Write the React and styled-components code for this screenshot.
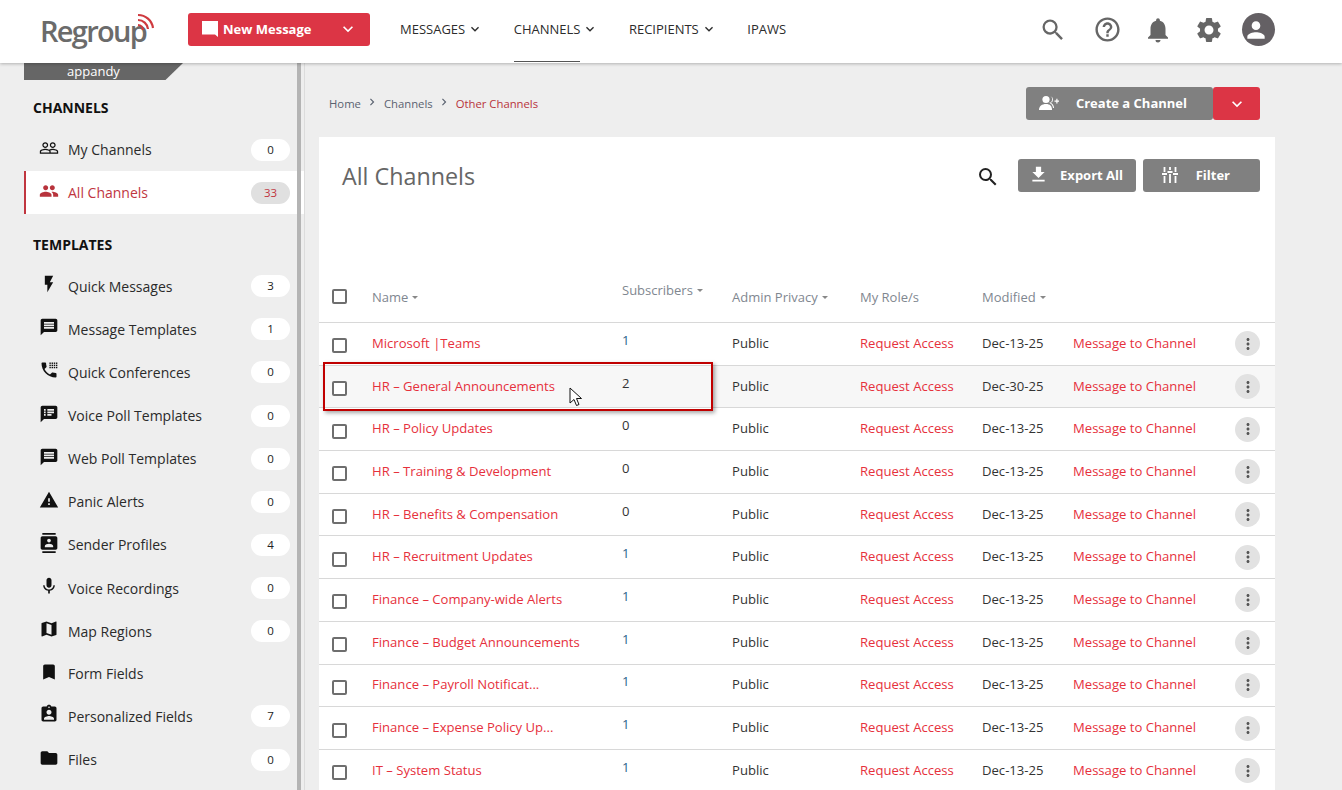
import React from 'react';
import styled, { createGlobalStyle } from 'styled-components';
import {
  MdPeopleOutline, MdPeople, MdFlashOn, MdMessage, MdSpeakerNotes, MdWarning,
  MdContacts, MdMic, MdMap, MdBookmark, MdAssignmentInd, MdFolder, MdSearch, MdHelpOutline,
  MdNotifications, MdSettings, MdPerson, MdKeyboardArrowDown, MdChevronRight, MdFileDownload,
  MdMoreVert,
} from 'react-icons/md';

const GlobalStyle = createGlobalStyle`
  html, body { margin: 0; padding: 0; height: 100%; overflow: hidden; }
  body { font-family: "Open Sans", "Liberation Sans", sans-serif; background: #eeeeee; color: #333; }
  * { box-sizing: border-box; }
`;

const Page = styled.div`
  height: 100vh;
  display: flex;
  flex-direction: column;
  overflow: hidden;
`;

const Header = styled.header`
  height: 63px;
  flex: none;
  background: #fff;
  box-shadow: 0 1px 3px rgba(0, 0, 0, 0.25);
  display: flex;
  align-items: center;
  padding-left: 40px;
  position: relative;
  z-index: 2;
`;

const Logo = styled.div`
  width: 148px;
  flex: none;
  position: relative;
  font-size: 29px;
  font-weight: 600;
  letter-spacing: -1.7px;
  color: #6b6b6b;
  line-height: 40px;
  margin-top: -1px;
  svg { position: absolute; left: 96px; top: -1px; }
`;

const NewMessage = styled.button`
  width: 182px;
  height: 33px;
  margin-top: -4px;
  border: 0;
  border-radius: 3px;
  background: #dc3545;
  color: #fff;
  font: 700 13px "Open Sans", sans-serif;
  display: flex;
  align-items: center;
  padding: 0 12px 2px 13px;
  gap: 4px;
  svg:last-child { margin-left: auto; }
`;

const Nav = styled.nav`
  display: flex;
  align-self: stretch;
  margin-left: 30px;
  gap: 30.5px;
`;

const NavItem = styled.div`
  display: flex;
  align-items: center;
  height: 100%;
  padding-bottom: 6px;
  font-size: 13px;
  color: #2c2c2c;
  svg { margin-left: 2px; }
`;

const NavLabel = styled.span`
  height: 100%;
  display: flex;
  align-items: center;
  position: relative;
  &::after {
    content: '';
    display: ${p => (p.$active ? 'block' : 'none')};
    position: absolute;
    left: 0;
    right: 0;
    bottom: -5px;
    height: 1px;
    background: #555;
  }
`;

const HeaderIcons = styled.div`
  margin-left: auto;
  margin-right: 67px;
  margin-top: -4px;
  display: flex;
  align-items: center;
  gap: 21px;
  color: #666;
  svg:first-child { margin-right: 5px; }
`;

const Avatar = styled.div`
  width: 33px;
  height: 33px;
  margin-left: -3px;
  border-radius: 50%;
  background: #646064;
  color: #fff;
  display: flex;
  align-items: center;
  justify-content: center;
`;

const Body = styled.div`
  flex: 1;
  display: flex;
  min-height: 0;
`;

const Sidebar = styled.aside`
  width: 305px;
  flex: none;
  border-right: 1px solid #dcdcdc;
  position: relative;
  padding-left: 24px;
  &::after {
    content: '';
    position: absolute;
    left: 297px;
    top: 0;
    bottom: 0;
    width: 4px;
    background: #b4b4b4;
  }
`;

const UserTab = styled.div`
  width: 159px;
  height: 17px;
  background: #666;
  color: #fff;
  font-size: 13px;
  line-height: 17px;
  text-align: center;
  padding-right: 20px;
  clip-path: polygon(0 0, 100% 0, 89% 100%, 0 100%);
`;

const SectionTitle = styled.h3`
  margin: 0;
  height: 20px;
  padding-left: 9px;
  font-size: 14px;
  font-weight: 700;
  line-height: 20px;
  color: #111;
`;

const SideList = styled.div`
  margin-top: ${p => p.$top}px;
`;

const SideRow = styled.div`
  width: 280px;
  height: ${p => (p.$short ? 42.1 : 43.15)}px;
  display: flex;
  align-items: center;
  padding-left: ${p => (p.$active ? 13 : 15)}px;
  padding-right: 14px;
  font-size: 14px;
  color: ${p => (p.$active ? '#c0363f' : '#2a2a2a')};
  background: ${p => (p.$active ? '#fff' : 'transparent')};
  border-left: ${p => (p.$active ? '2px solid #c0363f' : '0')};
  svg {
    flex: none;
    margin-right: 9px;
    margin-top: -4px;
    color: ${p => (p.$active ? '#b8333c' : '#111')};
  }
`;

const Pill = styled.span`
  margin-left: auto;
  width: 39px;
  height: 22px;
  border-radius: 11px;
  background: ${p => (p.$active ? '#e0e0e0' : '#fff')};
  color: ${p => (p.$active ? '#c0363f' : '#222')};
  font-size: 11.5px;
  text-align: center;
  line-height: 21px;
`;

const Main = styled.main`
  flex: 1;
  min-width: 0;
  padding: 0 67px 0 14px;
`;

const TopBar = styled.div`
  height: 74px;
  padding: 24px 15px 0 10px;
  display: flex;
  justify-content: space-between;
`;

const Breadcrumbs = styled.div`
  display: flex;
  align-items: center;
  height: 33px;
  font-size: 11.3px;
  color: #5a6270;
  svg { margin: -3px 4.5px 0 4.5px; }
`;

const CrumbActive = styled.span`
  color: #b8333c;
`;

const ButtonGroup = styled.div`
  display: flex;
`;

const GreyButton = styled.button`
  width: ${p => p.$width}px;
  height: 33px;
  border: 0;
  border-radius: 3px;
  background: #808080;
  color: #fff;
  font: 700 13px "Open Sans", sans-serif;
  display: flex;
  align-items: center;
  justify-content: space-between;
  padding: 0 ${p => p.$right}px 2px ${p => p.$left}px;
`;

const RedButton = styled.button`
  width: 47px;
  height: 33px;
  border: 0;
  border-radius: 3px;
  background: #dc3545;
  color: #fff;
  display: flex;
  align-items: center;
  justify-content: center;
  padding: 0;
`;

const Card = styled.section`
  background: #fff;
  height: 800px;
  position: relative;
`;

const CardTop = styled.div`
  height: 129px;
  padding: 22px 15px 0 23px;
  display: flex;
  align-items: flex-start;
`;

const Title = styled.h1`
  margin: 0;
  font-size: 23.3px;
  font-weight: 400;
  line-height: 35px;
  color: #666;
`;

const CardActions = styled.div`
  margin-left: auto;
  display: flex;
  align-items: center;
  gap: 7px;
  svg.search { margin: 2px 11px 0 0; color: #222; }
`;

const HeadRow = styled.div`
  display: grid;
  grid-template-columns: 53px 250px 110px 128px 122px 91px 162px 1fr;
  height: 57px;
  border-bottom: 1px solid #d8d8d8;
  font-size: 13px;
  color: #7f8790;
`;

const HeadCell = styled.div`
  display: flex;
  align-items: center;
  height: 100%;
  padding-top: ${p => (p.$raised ? '5px' : '12px')};
  padding-bottom: ${p => (p.$raised ? '14px' : '7px')};
`;

const Check = styled.span`
  width: 15px;
  height: 15px;
  border: 2px solid #6e6e6e;
  border-radius: 2px;
  background: #fff;
  margin-left: 13px;
  margin-top: ${p => p.$top || 0}px;
`;

const Row = styled.div`
  display: grid;
  grid-template-columns: 53px 250px 110px 128px 122px 91px 162px 1fr;
  align-items: center;
  height: 42.7px;
  border-bottom: 1px solid #d8d8d8;
  background: ${p => (p.$hover ? '#f7f7f7' : '#fff')};
  font-size: 13.1px;
  color: #333;
`;

const Cell = styled.span`
  margin-bottom: 2px;
`;

const RedLink = styled.span`
  color: #e6303c;
  white-space: nowrap;
  margin-bottom: 2px;
`;

const SubCount = styled.span`
  color: ${p => (p.$zero ? '#333' : '#2a5f8a')};
  margin-bottom: 8px;
`;

const MenuDot = styled.span`
  width: 25px;
  height: 25px;
  border-radius: 50%;
  background: #e2e2e2;
  color: #555;
  display: flex;
  align-items: center;
  justify-content: center;
`;

const Highlight = styled.div`
  position: absolute;
  left: 4px;
  top: 225px;
  width: 390px;
  height: 49px;
  border: 2px solid #c00000;
  box-shadow: 2px 2px 4px rgba(0, 0, 0, 0.35);
  pointer-events: none;
`;

const Cursor = styled.svg`
  position: absolute;
  left: 250px;
  top: 250px;
`;

function ConferenceIcon({ size }) {
  const dots = [];
  for (let r = 0; r < 3; r++) {
    for (let c = 0; c < 4; c++) {
      dots.push(<rect key={`${r}-${c}`} x={12.5 + c * 2.6} y={3 + r * 2.6} width="1.7" height="1.7" />);
    }
  }
  return (
    <svg width={size} height={size} viewBox="0 0 24 24" fill="currentColor">
      <path d="M20 15.5c-1.25 0-2.45-.2-3.57-.57-.35-.11-.74-.03-1.02.24l-2.2 2.2c-2.83-1.44-5.15-3.75-6.59-6.59l2.2-2.21c.28-.26.36-.65.25-1C8.700 6.450 8.500 5.250 8.500 4c0-.55-.45-1-1-1H4c-.55 0-1 .45-1 1 0 9.390 7.610 17 17 17 .55 0 1-.45 1-1v-3.500c0-.55-.45-1-1-1z" />
      {dots}
    </svg>
  );
}

const channels = [
  { icon: MdPeopleOutline, label: 'My Channels', count: 0 },
  { icon: MdPeople, label: 'All Channels', count: 33, active: true },
];

const templates = [
  { icon: MdFlashOn, label: 'Quick Messages', count: 3 },
  { icon: MdMessage, label: 'Message Templates', count: 1 },
  { icon: ConferenceIcon, label: 'Quick Conferences', count: 0 },
  { icon: MdSpeakerNotes, label: 'Voice Poll Templates', count: 0 },
  { icon: MdMessage, label: 'Web Poll Templates', count: 0 },
  { icon: MdWarning, label: 'Panic Alerts', count: 0 },
  { icon: MdContacts, label: 'Sender Profiles', count: 4 },
  { icon: MdMic, label: 'Voice Recordings', count: 0 },
  { icon: MdMap, label: 'Map Regions', count: 0 },
  { icon: MdBookmark, label: 'Form Fields' },
  { icon: MdAssignmentInd, label: 'Personalized Fields', count: 7 },
  { icon: MdFolder, label: 'Files', count: 0 },
];

const rows = [
  ['Microsoft |Teams', 1, 'Dec-13-25'],
  ['HR – General Announcements', 2, 'Dec-30-25'],
  ['HR – Policy Updates', 0, 'Dec-13-25'],
  ['HR – Training & Development', 0, 'Dec-13-25'],
  ['HR – Benefits & Compensation', 0, 'Dec-13-25'],
  ['HR – Recruitment Updates', 1, 'Dec-13-25'],
  ['Finance – Company-wide Alerts', 1, 'Dec-13-25'],
  ['Finance – Budget Announcements', 1, 'Dec-13-25'],
  ['Finance – Payroll Notificat...', 1, 'Dec-13-25'],
  ['Finance – Expense Policy Up...', 1, 'Dec-13-25'],
  ['IT – System Status', 1, 'Dec-13-25'],
];

function SideItem({ item }) {
  const Icon = item.icon;
  const hasCount = item.count !== undefined;
  return (
    <SideRow $active={item.active} $short={!hasCount}>
      <Icon size={20} />
      {item.label}
      {hasCount ? <Pill $active={item.active}>{item.count}</Pill> : null}
    </SideRow>
  );
}

function Sort() {
  return (
    <svg width="13" height="8" viewBox="0 0 13 8">
      <path d="M4 3h6L7 6z" fill="#888" />
    </svg>
  );
}

export default function App() {
  return (
    <Page>
      <GlobalStyle />
      <Header>
        <Logo>
          Regroup
          <svg width="20" height="24" viewBox="0 0 20 24" fill="none" stroke="#cf3a3f" strokeWidth="2.200">
            <path d="M2 15a5 5 0 0 1 5 5" />
            <path d="M2 10a10 10 0 0 1 10 9" />
            <path d="M2 5a15 15 0 0 1 15 13" />
          </svg>
        </Logo>
        <NewMessage>
          <svg width="18" height="17" viewBox="0 0 18 17" fill="#fff">
            <path d="M1 1h16v16l-3-2.500H1z" />
          </svg>
          New Message
          <MdKeyboardArrowDown size={20} />
        </NewMessage>
        <Nav>
          <NavItem><NavLabel>MESSAGES</NavLabel><MdKeyboardArrowDown size={16} /></NavItem>
          <NavItem><NavLabel $active>CHANNELS</NavLabel><MdKeyboardArrowDown size={16} /></NavItem>
          <NavItem><NavLabel>RECIPIENTS</NavLabel><MdKeyboardArrowDown size={16} /></NavItem>
          <NavItem><NavLabel>IPAWS</NavLabel></NavItem>
        </Nav>
        <HeaderIcons>
          <MdSearch size={28} />
          <MdHelpOutline size={29} />
          <MdNotifications size={30} />
          <MdSettings size={30} />
          <Avatar><MdPerson size={26} /></Avatar>
        </HeaderIcons>
      </Header>
      <Body>
        <Sidebar>
          <UserTab>appandy</UserTab>
          <SideList $top={18}><SectionTitle>CHANNELS</SectionTitle></SideList>
          <SideList $top={10}>
            {channels.map(c => <SideItem key={c.label} item={c} />)}
          </SideList>
          <SideList $top={20.7}><SectionTitle>TEMPLATES</SectionTitle></SideList>
          <SideList $top={9.6}>
            {templates.map(c => <SideItem key={c.label} item={c} />)}
          </SideList>
        </Sidebar>
        <Main>
          <TopBar>
            <Breadcrumbs>
              Home<MdChevronRight size={14} />Channels<MdChevronRight size={14} /><CrumbActive>Other Channels</CrumbActive>
            </Breadcrumbs>
            <ButtonGroup>
              <GreyButton $width={187} $left={12} $right={26}>
                <svg width="21" height="16" viewBox="0 0 21 16" fill="#fff">
                  <circle cx="8" cy="4.500" r="3.600" />
                  <path d="M1 15c0-4 3-6 7-6s6 2 6 6z" />
                  <path d="M12.500 1.200a3.400 3.400 0 0 1 0 6.600c2.200.8 3.500 2.800 3.500 5.200h-1c-.3-2.500-1.500-4.300-3.800-5.300a3.500 3.500 0 0 0 1.300-6.500z" />
                  <path d="M16.500 5.500h1.800V3.700h1.200v1.800h1.500v1.200h-1.500v1.800h-1.200V6.700h-1.800z" />
                </svg>
                Create a Channel
              </GreyButton>
              <RedButton><MdKeyboardArrowDown size={20} /></RedButton>
            </ButtonGroup>
          </TopBar>
          <Card>
            <CardTop>
              <Title>All Channels</Title>
              <CardActions>
                <MdSearch className="search" size={24} />
                <GreyButton $width={118} $left={10} $right={13}>
                  <MdFileDownload size={21} />
                  Export All
                </GreyButton>
                <GreyButton $width={117} $left={19} $right={30}>
                  <svg width="16" height="18" viewBox="0 0 16 18" fill="none" stroke="#fff" strokeWidth="1.800">
                    <path d="M2.500 1v5M8 1v3M13.500 1v5M2.500 10v7M8 8v9M13.500 10v7M0 8h5M5.500 6h5M11 8h5" />
                  </svg>
                  Filter
                </GreyButton>
              </CardActions>
            </CardTop>
            <HeadRow>
              <HeadCell><Check /></HeadCell>
              <HeadCell>Name<Sort /></HeadCell>
              <HeadCell $raised>Subscribers<Sort /></HeadCell>
              <HeadCell>Admin Privacy<Sort /></HeadCell>
              <HeadCell>My Role/s</HeadCell>
              <HeadCell>Modified<Sort /></HeadCell>
              <HeadCell />
              <HeadCell />
            </HeadRow>
            {rows.map((r, i) => (
              <Row key={r[0]} $hover={i === 1}>
                <Check $top={4} />
                <RedLink>{r[0]}</RedLink>
                <SubCount $zero={r[1] !== 1}>{r[1]}</SubCount>
                <Cell>Public</Cell>
                <RedLink>Request Access</RedLink>
                <Cell>{r[2]}</Cell>
                <RedLink>Message to Channel</RedLink>
                <MenuDot><MdMoreVert size={18} /></MenuDot>
              </Row>
            ))}
            <Highlight />
            <Cursor width="14" height="20" viewBox="0 0 14 20">
              <path d="M1 1v15l4-3.500 2.500 6 2.500-1-2.500-6h5z" fill="#fff" stroke="#111" strokeWidth="1" />
            </Cursor>
          </Card>
        </Main>
      </Body>
    </Page>
  );
}
